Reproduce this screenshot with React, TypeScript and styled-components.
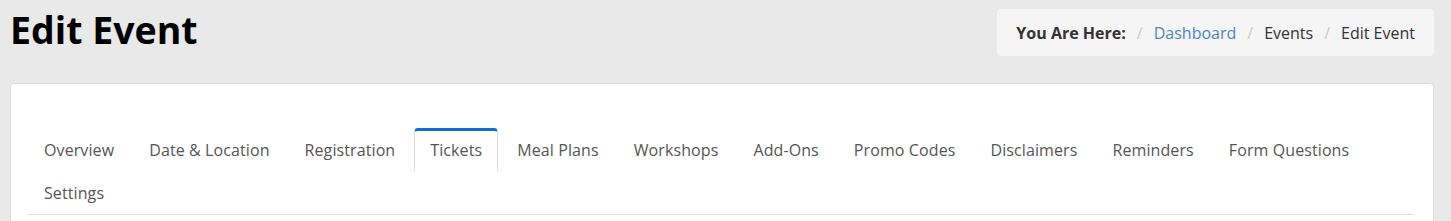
import React from 'react';
import styled, { createGlobalStyle } from 'styled-components';

const tabs = [
  'Overview',
  'Date & Location',
  'Registration',
  'Tickets',
  'Meal Plans',
  'Workshops',
  'Add-Ons',
  'Promo Codes',
  'Disclaimers',
  'Reminders',
  'Form Questions',
  'Settings',
];

const crumbs = [
  { label: 'Dashboard', link: true },
  { label: 'Events', link: false },
  { label: 'Edit Event', link: false },
];

export default function App() {
  return (
    <>
      <GlobalStyle />
      <Page>
        <Header>
          <Title>Edit Event</Title>
          <Breadcrumb>
            <Here>You Are Here:</Here>
            {crumbs.map((c) => (
              <React.Fragment key={c.label}>
                <Separator>/</Separator>
                <Crumb $link={c.link}>{c.label}</Crumb>
              </React.Fragment>
            ))}
          </Breadcrumb>
        </Header>
        <Card>
          <TabList>
            {tabs.map((t) => (
              <Tab key={t} $active={t === 'Tickets'}>
                {t}
              </Tab>
            ))}
          </TabList>
        </Card>
      </Page>
    </>
  );
}

const GlobalStyle = createGlobalStyle`
  html, body {
    margin: 0;
    padding: 0;
    background: #e9e9e9;
    font-family: "Open Sans", "Liberation Sans", sans-serif;
  }
`;

const Page = styled.div`
  min-height: 221px;
  padding: 0 17px 0 10px;
  box-sizing: border-box;
  overflow: hidden;
`;

const Header = styled.div`
  display: flex;
  justify-content: space-between;
  align-items: flex-start;
  height: 83px;
`;

const Title = styled.h1`
  margin: 10px 0 0;
  font-size: 37.5px;
  line-height: 40px;
  font-weight: 700;
  color: #000;
`;

const Breadcrumb = styled.div`
  margin-top: 9px;
  height: 47px;
  padding: 0 19px;
  display: flex;
  align-items: center;
  background: #f5f5f5;
  border-radius: 4px;
  font-size: 16px;
  color: #333;
`;

const Here = styled.span`
  font-weight: 700;
`;

const Separator = styled.span`
  color: #cccccc;
  margin: 0 11px;
`;

const Crumb = styled.span<{ $link: boolean }>`
  color: ${(p) => (p.$link ? '#4a86c5' : '#333')};
`;

const Card = styled.div`
  background: #fff;
  border: 1px solid #dcdcdc;
  border-radius: 4px;
  padding: 44px 20px 20px 17px;
  min-height: 200px;
`;

const TabList = styled.div`
  display: flex;
  flex-wrap: wrap;
  border-bottom: 1px solid #dddddd;
`;

const Tab = styled.div<{ $active: boolean }>`
  margin-right: 3px;
  margin-bottom: -1px;
  padding: ${(p) => (p.$active ? '8px' : '10px')} 15px 10px;
  font-size: 16px;
  line-height: 22px;
  letter-spacing: 0.1px;
  color: #555;
  background: ${(p) => (p.$active ? '#fff' : 'transparent')};
  border: 1px solid ${(p) => (p.$active ? '#dddddd' : 'transparent')};
  border-top: ${(p) => (p.$active ? '3px solid #0b6fd3' : '1px solid transparent')};
  border-bottom-color: ${(p) => (p.$active ? '#fff' : 'transparent')};
  border-radius: 4px 4px 0 0;
  cursor: pointer;
`;
